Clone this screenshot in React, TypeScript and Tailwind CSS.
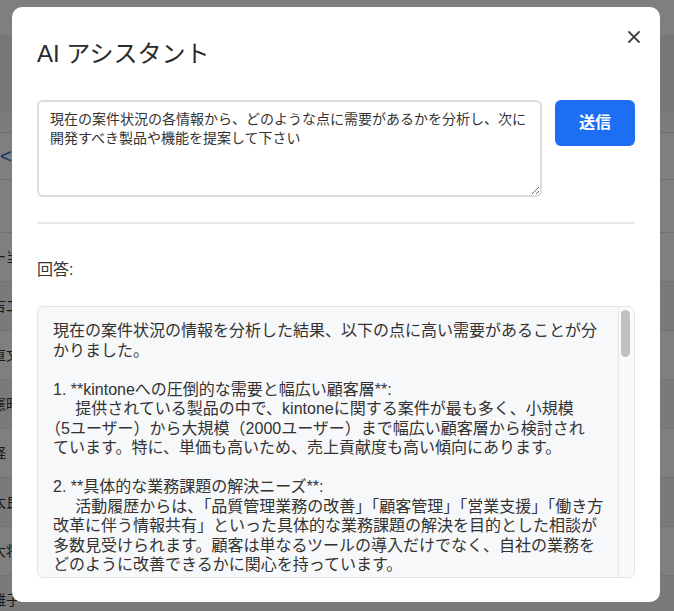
import React from "react";

const answerLines = [
  "現在の案件状況の情報を分析した結果、以下の点に高い需要があることが分",
  "かりました。",
  "",
  "1. **kintoneへの圧倒的な需要と幅広い顧客層**:",
  "     提供されている製品の中で、kintoneに関する案件が最も多く、小規模",
  "（5ユーザー）から大規模（2000ユーザー）まで幅広い顧客層から検討され",
  "ています。特に、単価も高いため、売上貢献度も高い傾向にあります。",
  "",
  "2. **具体的な業務課題の解決ニーズ**:",
  "     活動履歴からは、「品質管理業務の改善」「顧客管理」「営業支援」「働き方",
  "改革に伴う情報共有」といった具体的な業務課題の解決を目的とした相談が",
  "多数見受けられます。顧客は単なるツールの導入だけでなく、自社の業務を",
  "どのように改善できるかに関心を持っています。",
  "",
  "3. **周辺製品との連携ニーズ**:",
  "     kintoneと他のサービスを組み合わせた提案も多く見受けられます。",
];

const rows = [
  { t: "ー当", bg: "bg-white" },
  { t: "吉二", bg: "bg-[#f4f4f4]" },
  { t: "直文", bg: "bg-white" },
  { t: "憲昭", bg: "bg-[#f4f4f4]" },
  { t: "経", bg: "bg-white" },
  { t: "太良", bg: "bg-[#f4f4f4]" },
  { t: "大将", bg: "bg-white" },
  { t: "雄子", bg: "bg-[#f4f4f4]" },
];

export default function App() {
  return (
    <div className="relative h-[611px] w-[674px] overflow-hidden bg-white font-['Liberation_Sans','Noto_Sans_CJK_JP',sans-serif] text-[#333]">
      {/* underlying page */}
      <div className="flex flex-col">
        <div className="h-[35px] bg-white" />
        <div className="h-[78px] bg-[#eeeeee]" />
        <div className="h-[20px] border-b border-[#dddddd] bg-[#f8f8f8]" />
        <div className="flex h-[47px] items-center border-b border-[#e0e0e0] bg-white">
          <span className="text-[20px] leading-none text-[#2f6fd6]">&lt;</span>
        </div>
        <div className="h-[53px] border-b border-[#e0e0e0] bg-white" />
        {rows.map((r, i) => (
          <div
            key={i}
            className={`flex h-[49px] items-center border-b border-[#e6e6e6] ${r.bg}`}
          >
            <span className="-ml-[8px] whitespace-nowrap text-[14px] text-[#333]">{r.t}</span>
          </div>
        ))}
      </div>

      {/* overlay */}
      <div className="absolute inset-0 flex justify-start bg-black/50 pl-[12px] pt-[7px]">
        <div className="relative flex h-[595px] w-[648px] flex-col rounded-[10px] bg-white px-[25px] pt-[31px]">
          <button className="absolute right-[20px] top-[24px] flex h-[12px] w-[12px] items-center justify-center text-[#444]">
            <svg width="12" height="12" viewBox="0 0 12 12" fill="none">
              <path d="M1 1L11 11M11 1L1 11" stroke="currentColor" strokeWidth="1.8" strokeLinecap="round" />
            </svg>
          </button>

          <h2 className="text-[24px] font-normal leading-[32px] text-[#2a2a2a]">AI アシスタント</h2>

          <div className="mt-[30px] flex gap-[13px]">
            <textarea
              className="h-[97px] w-[506px] rounded-[6px] border-2 border-[#dcdcdc] px-[11px] py-[8px] text-[14px] leading-[19px] text-[#333] outline-none"
              defaultValue="現在の案件状況の各情報から、どのような点に需要があるかを分析し、次に開発すべき製品や機能を提案して下さい"
            />
            <button className="flex h-[46px] w-[80px] items-center justify-center rounded-[6px] bg-[#1c6ef3] text-[16px] font-bold text-white">
              送信
            </button>
          </div>

          <div className="mt-[25px] h-[2px] bg-[#e8e8e8]" />

          <div className="mt-[34px] text-[16px] leading-[24px] text-[#333]">回答:</div>

          <div className="mt-[24px] flex h-[272px] overflow-hidden rounded-[6px] border border-[#e3e5e8] bg-[#f7f8fa]">
            <div className="flex-1 overflow-hidden pl-[15px] pt-[14px] text-[16px] leading-[19.5px] text-[#333] [text-spacing-trim:trim-start]">
              {answerLines.map((l, i) => (
                <div key={i} className="h-[19.5px] whitespace-pre">
                  {l || " "}
                </div>
              ))}
            </div>
            <div className="w-[16px] shrink-0 border-l border-[#e6e6e6] bg-[#fafafa] pl-[2px] pr-[4px] pt-[3px]">
              <div className="h-[47px] rounded-full bg-[#c1c1c1]" />
            </div>
          </div>
        </div>
      </div>
    </div>
  );
}
